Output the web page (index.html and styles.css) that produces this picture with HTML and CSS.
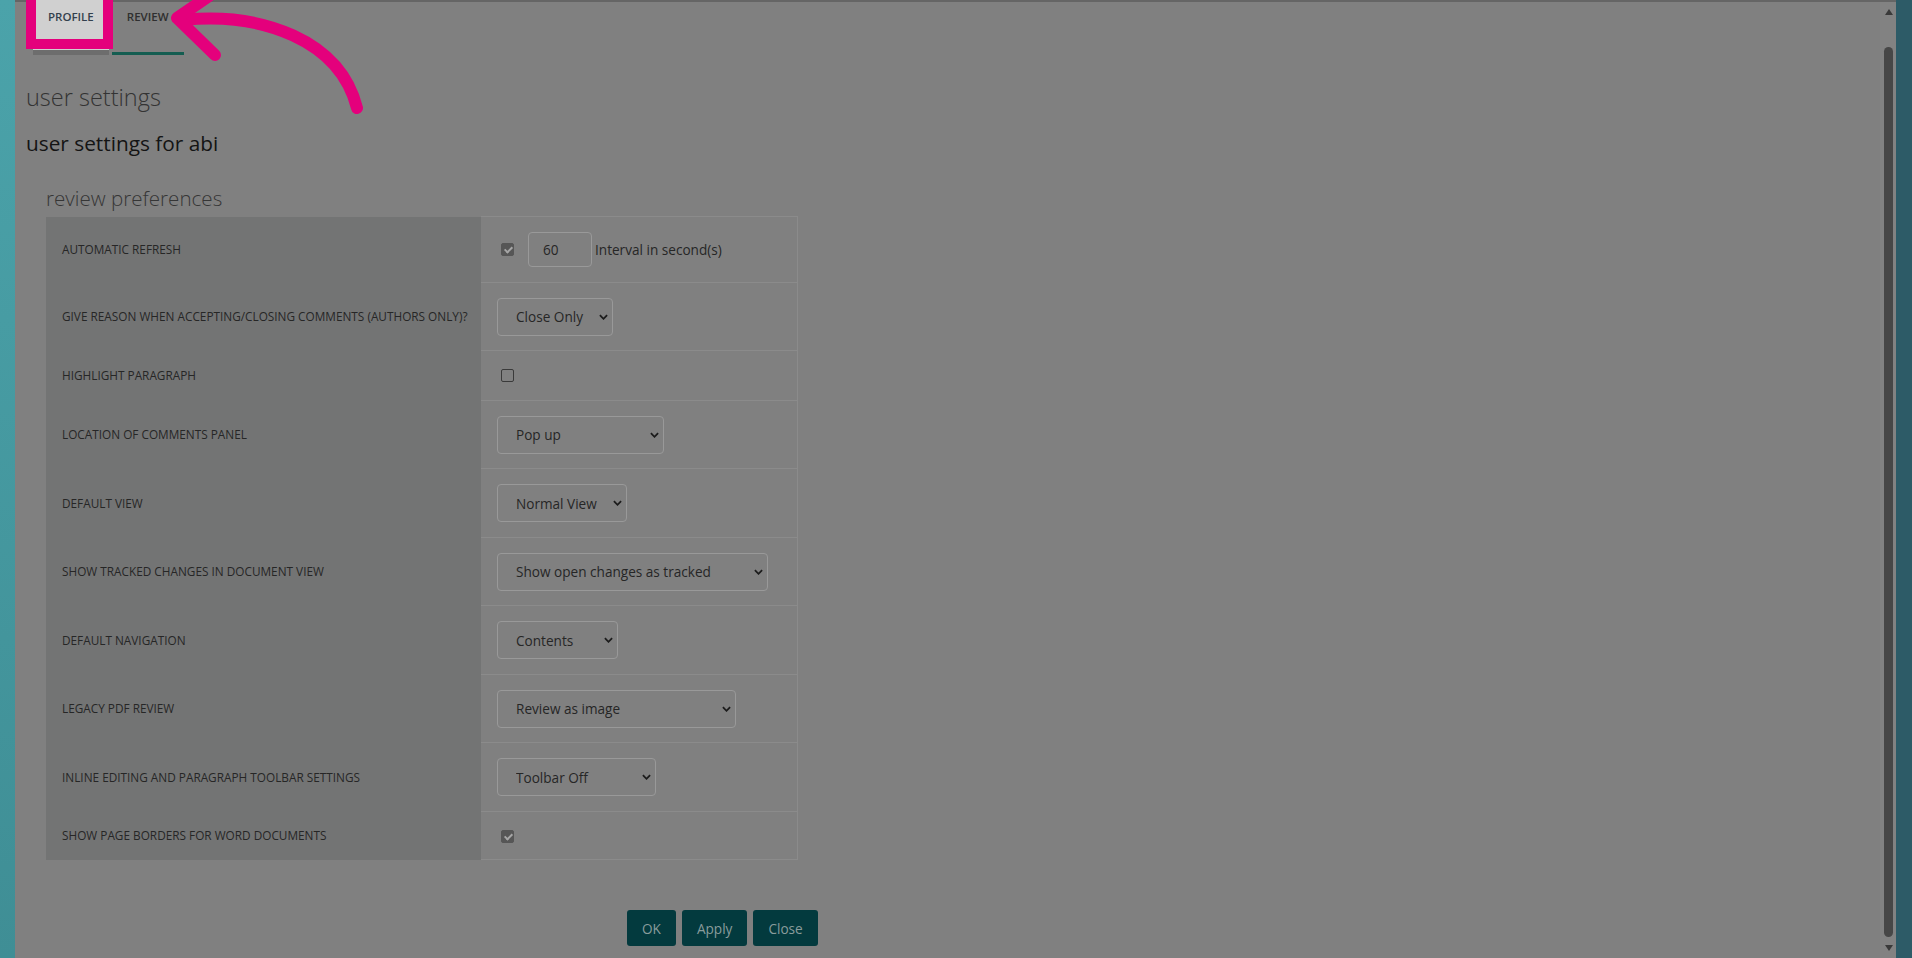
FILE: index.html
```html
<!DOCTYPE html>
<html lang="en">
<head>
    <meta charset="UTF-8">
    <meta name="viewport" content="width=device-width, initial-scale=1.0">
    <title>User settings</title>
    <link rel="stylesheet" href="styles.css">
</head>
<body>
    <div class="frame">
        <div class="edge edge-left"></div>

        <div class="dialog">
            <div class="dialog-body">
                <!-- tabs -->
                <nav class="tabs">
                    <a class="tab tab-profile">PROFILE</a>
                    <a class="tab tab-review">REVIEW</a>
                </nav>

                <h1 class="page-title">user settings</h1>
                <h2 class="page-subtitle">user settings for abi</h2>

                <!-- review preferences -->
                <section class="prefs">
                    <h3 class="prefs-title">review preferences</h3>
                    <table class="prefs-table">
                        <tr>
                            <th>AUTOMATIC REFRESH</th>
                            <td>
                                <div class="field">
                                    <input type="checkbox" checked>
                                    <input type="text" class="interval" value="60">
                                    <span class="hint">Interval in second(s)</span>
                                </div>
                            </td>
                        </tr>
                        <tr>
                            <th>GIVE REASON WHEN ACCEPTING/CLOSING COMMENTS (AUTHORS ONLY)?</th>
                            <td>
                                <div class="field">
                                    <span class="select-wrap">
                                        <select class="w-close"><option>Close Only</option><option>Always</option><option>Never</option></select>
                                        <svg class="chevron" viewBox="0 0 10 6"><path d="M1 1 L5 5 L9 1"/></svg>
                                    </span>
                                </div>
                            </td>
                        </tr>
                        <tr>
                            <th>HIGHLIGHT PARAGRAPH</th>
                            <td><div class="field"><input type="checkbox"></div></td>
                        </tr>
                        <tr>
                            <th>LOCATION OF COMMENTS PANEL</th>
                            <td>
                                <div class="field">
                                    <span class="select-wrap">
                                        <select class="w-popup"><option>Pop up</option><option>Right side</option></select>
                                        <svg class="chevron" viewBox="0 0 10 6"><path d="M1 1 L5 5 L9 1"/></svg>
                                    </span>
                                </div>
                            </td>
                        </tr>
                        <tr>
                            <th>DEFAULT VIEW</th>
                            <td>
                                <div class="field">
                                    <span class="select-wrap">
                                        <select class="w-view"><option>Normal View</option><option>Print View</option></select>
                                        <svg class="chevron" viewBox="0 0 10 6"><path d="M1 1 L5 5 L9 1"/></svg>
                                    </span>
                                </div>
                            </td>
                        </tr>
                        <tr>
                            <th>SHOW TRACKED CHANGES IN DOCUMENT VIEW</th>
                            <td>
                                <div class="field">
                                    <span class="select-wrap">
                                        <select class="w-tracked"><option>Show open changes as tracked</option><option>Show all changes as tracked</option></select>
                                        <svg class="chevron" viewBox="0 0 10 6"><path d="M1 1 L5 5 L9 1"/></svg>
                                    </span>
                                </div>
                            </td>
                        </tr>
                        <tr>
                            <th>DEFAULT NAVIGATION</th>
                            <td>
                                <div class="field">
                                    <span class="select-wrap">
                                        <select class="w-nav"><option>Contents</option><option>Comments</option></select>
                                        <svg class="chevron" viewBox="0 0 10 6"><path d="M1 1 L5 5 L9 1"/></svg>
                                    </span>
                                </div>
                            </td>
                        </tr>
                        <tr>
                            <th>LEGACY PDF REVIEW</th>
                            <td>
                                <div class="field">
                                    <span class="select-wrap">
                                        <select class="w-pdf"><option>Review as image</option><option>Review as text</option></select>
                                        <svg class="chevron" viewBox="0 0 10 6"><path d="M1 1 L5 5 L9 1"/></svg>
                                    </span>
                                </div>
                            </td>
                        </tr>
                        <tr>
                            <th>INLINE EDITING AND PARAGRAPH TOOLBAR SETTINGS</th>
                            <td>
                                <div class="field">
                                    <span class="select-wrap">
                                        <select class="w-toolbar"><option>Toolbar Off</option><option>Toolbar On</option></select>
                                        <svg class="chevron" viewBox="0 0 10 6"><path d="M1 1 L5 5 L9 1"/></svg>
                                    </span>
                                </div>
                            </td>
                        </tr>
                        <tr>
                            <th>SHOW PAGE BORDERS FOR WORD DOCUMENTS</th>
                            <td><div class="field"><input type="checkbox" checked></div></td>
                        </tr>
                    </table>
                </section>

                <div class="actions">
                    <button class="btn">OK</button>
                    <button class="btn">Apply</button>
                    <button class="btn">Close</button>
                </div>
            </div>

            <!-- scrollbar -->
            <div class="scrollbar">
                <span class="arrow arrow-up"></span>
                <span class="thumb"></span>
                <span class="arrow arrow-down"></span>
            </div>
        </div>

        <div class="edge edge-right"></div>

        <!-- annotation -->
        <span class="callout-box"></span>
        <svg class="callout-arrow" width="420" height="140" viewBox="0 0 420 140">
            <path d="M183 20 C 262 12, 340 40, 357 108"/>
            <path d="M209 -4 L 177 18 L 215 55"/>
        </svg>
    </div>
</body>
</html>
```

FILE: styles.css
```css
* {
    box-sizing: border-box;
    margin: 0;
    padding: 0;
}

html, body {
    height: 100%;
    overflow: hidden;
}

body {
    font-family: 'Open Sans', 'Liberation Sans', sans-serif;
    background-color: #808080;
    color: #262626;
}

.frame {
    position: relative;
    display: flex;
    height: 958px;
}

.edge {
    flex: 0 0 auto;
}

.edge-left {
    width: 15px;
    background: linear-gradient(to bottom, #4ba3aa, #3f8e95);
}

.edge-right {
    width: 16px;
    background: #2d5b67;
}

.dialog {
    flex: 1;
    display: flex;
    background: #808080;
    border-top: 2px solid #656565;
}

.dialog-body {
    flex: 1;
    padding-left: 11px;
}

/* tabs */
.tabs {
    display: flex;
    gap: 3px;
    padding-left: 7px;
    margin-top: -2px;
}

.tab {
    display: block;
    font-size: 11.5px;
    font-weight: 600;
    line-height: 14px;
    padding: 10px 15px 26px;
    color: #2f2f2f;
}

.tab-profile {
    background: #d0d0d0;
    color: #33404d;
    border-bottom: 5px solid #6d6d6d;
}

.tab-review {
    padding-bottom: 28px;
    border-bottom: 3px solid #145d51;
}

/* headings */
.page-title {
    font-size: 23.5px;
    font-weight: 300;
    line-height: 30px;
    color: #333;
    margin-top: 27px;
}

.page-subtitle {
    font-size: 20.8px;
    font-weight: 400;
    line-height: 28px;
    color: #141414;
    margin-top: 17px;
}

.prefs {
    margin-left: 20px;
    margin-top: 27px;
}

.prefs-title {
    font-size: 20.6px;
    font-weight: 300;
    line-height: 28px;
    color: #363636;
    margin-bottom: 4px;
}

/* table */
.prefs-table {
    border-collapse: collapse;
    table-layout: fixed;
    width: 751px;
}

.prefs-table th {
    width: 435px;
    background: #737474;
    text-align: left;
    font-size: 11.8px;
    font-weight: 400;
    color: #262626;
    padding: 0 6px 0 16px;
    vertical-align: middle;
    white-space: nowrap;
}

.prefs-table td {
    width: 316px;
    padding: 15px 16px 14.5px;
    border-top: 1px solid #8b8b8b;
    border-right: 1px solid #8b8b8b;
    border-bottom: 1px solid #8b8b8b;
}

.prefs-table tr:last-child td {
    padding-bottom: 13.5px;
}

.field {
    display: flex;
    align-items: center;
    min-height: 19px;
}

input[type="checkbox"] {
    appearance: none;
    -webkit-appearance: none;
    position: relative;
    width: 13px;
    height: 13px;
    margin: 3px 3px 3px 4px;
    border: 1px solid #3a3a3a;
    border-radius: 2px;
    background: transparent;
}

input[type="checkbox"]:checked {
    background: #565656;
    border-color: #565656;
}

input[type="checkbox"]:checked::after {
    content: '';
    position: absolute;
    left: 3.5px;
    top: 1px;
    width: 3px;
    height: 6px;
    border-right: 2px solid #a6a6a6;
    border-bottom: 2px solid #a6a6a6;
    transform: rotate(45deg);
}

.interval {
    width: 64px;
    height: 35px;
    margin-left: 11px;
    padding: 0 14px;
    border: 1px solid #999;
    border-radius: 4px;
    background: transparent;
    font-family: inherit;
    font-size: 13.6px;
    color: #262626;
}

.hint {
    margin-left: 3px;
    font-size: 13.6px;
    color: #262626;
}

.select-wrap {
    position: relative;
    display: inline-block;
}

select {
    appearance: none;
    -webkit-appearance: none;
    display: block;
    height: 38px;
    padding: 0 18px;
    border: 1px solid #999;
    border-radius: 4px;
    background: transparent;
    font-family: inherit;
    font-size: 13.6px;
    color: #262626;
}

.chevron {
    position: absolute;
    right: 5px;
    top: 16px;
    width: 9px;
    height: 6px;
    pointer-events: none;
}

.chevron path {
    fill: none;
    stroke: #1c1c1c;
    stroke-width: 2;
}

.w-close { width: 116px; }
.w-popup { width: 167px; }
.w-view { width: 130px; }
.w-tracked { width: 271px; }
.w-nav { width: 121px; }
.w-pdf { width: 239px; }
.w-toolbar { width: 159px; }

/* footer buttons */
.actions {
    display: flex;
    gap: 6px;
    padding-left: 601px;
    margin-top: 50px;
}

.btn {
    height: 36px;
    padding: 0 15px;
    border: none;
    border-radius: 3px;
    background: #033a3e;
    color: #899c9c;
    font-family: inherit;
    font-size: 13.6px;
    cursor: pointer;
}

/* scrollbar */
.scrollbar {
    position: relative;
    width: 16px;
    background: #828282;
}

.thumb {
    position: absolute;
    left: 4px;
    top: 45px;
    width: 9px;
    height: 890px;
    border-radius: 5px;
    background: #474747;
}

.arrow {
    position: absolute;
    left: 5px;
    width: 0;
    height: 0;
    border-left: 4px solid transparent;
    border-right: 4px solid transparent;
}

.arrow-up {
    top: 7px;
    border-bottom: 6px solid #3a3a3a;
}

.arrow-down {
    top: 943px;
    border-top: 6px solid #3a3a3a;
}

/* annotation overlay */
.callout-box {
    position: absolute;
    left: 26px;
    top: -12px;
    width: 87px;
    height: 61px;
    border: 10px solid #e4007c;
}

.callout-arrow {
    position: absolute;
    left: 0;
    top: 0;
    overflow: visible;
}

.callout-arrow path {
    fill: none;
    stroke: #e4007c;
    stroke-width: 12;
    stroke-linecap: round;
    stroke-linejoin: round;
}
```
